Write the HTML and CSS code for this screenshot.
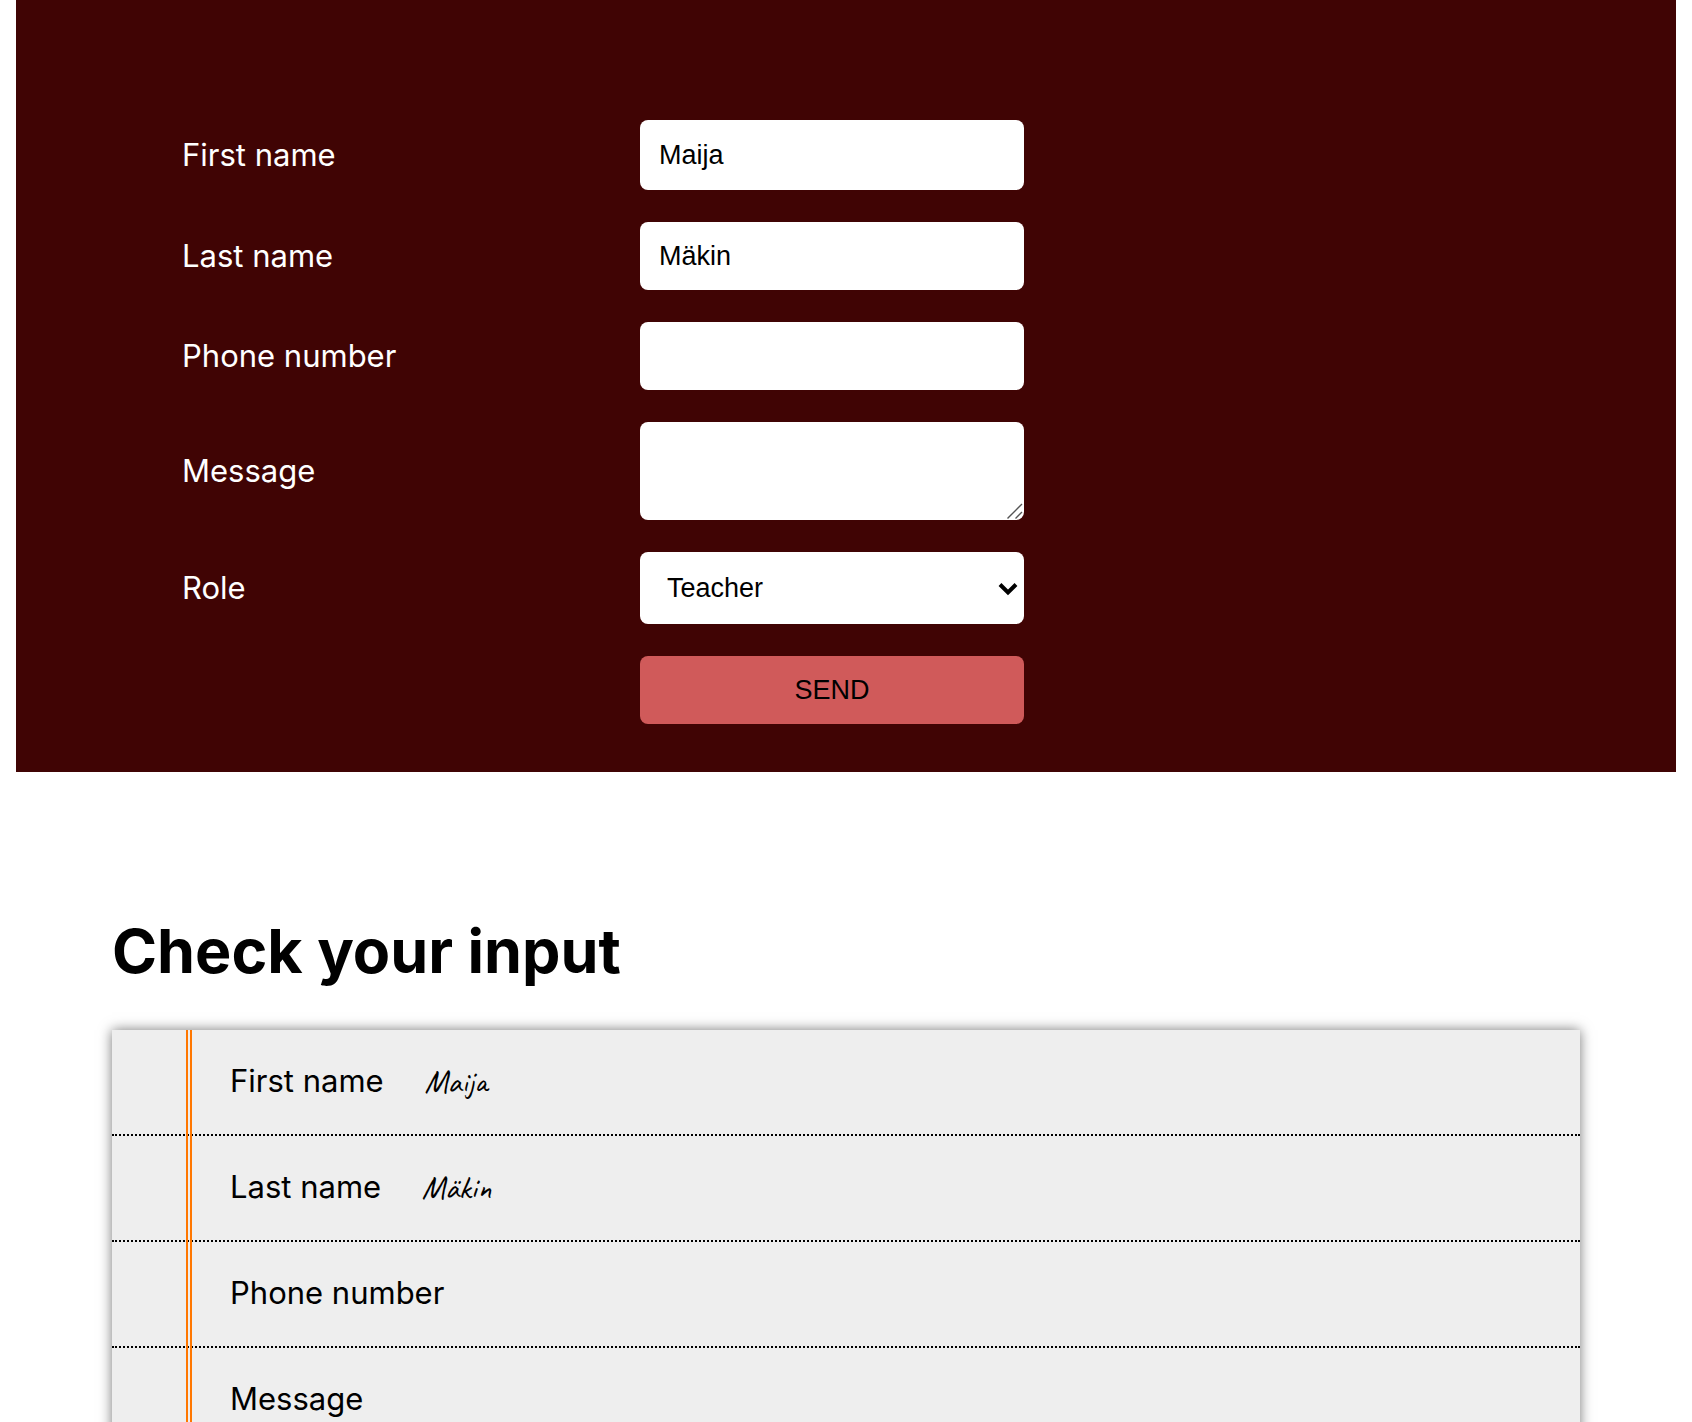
FILE: index.html
```html
<!DOCTYPE html>
<html lang="en">
<head>
  <meta charset="utf-8">
  <meta name="viewport" content="width=device-width, initial-scale=1">
  <title>Check your input</title>
  <link rel="stylesheet" href="styles.css">
</head>
<body>
  <form class="form">
    <label class="label" for="firstname">First name</label>
    <input class="control control-first" type="text" id="firstname" value="Maija">

    <label class="label" for="lastname">Last name</label>
    <input class="control" type="text" id="lastname" value="Mäkin">

    <label class="label" for="phone">Phone number</label>
    <input class="control" type="tel" id="phone">

    <label class="label" for="message">Message</label>
    <div class="control-wrap">
      <textarea class="control message" id="message" rows="2"></textarea>
      <svg class="grip" width="16" height="16" viewBox="0 0 16 16" aria-hidden="true">
        <path d="M0.500 15.500 15 1M8.500 15.500 15 9" fill="none" stroke="#555" stroke-width="1.400"/>
      </svg>
    </div>

    <label class="label" for="role">Role</label>
    <div class="control-wrap">
      <select class="control role" id="role">
        <option>Teacher</option>
        <option>Student</option>
        <option>Other</option>
      </select>
      <svg class="chevron" width="20" height="14" viewBox="0 0 20 14" aria-hidden="true">
        <path d="M2 2.500 10 10.500 18 2.500" fill="none" stroke="#000" stroke-width="4"/>
      </svg>
    </div>

    <button class="control send" type="button">SEND</button>
  </form>

  <main class="review">
    <h1 class="title">Check your input</h1>
    <ul class="sheet">
      <li class="row">First name <span class="value">Maija</span></li>
      <li class="row">Last name <span class="value">Mäkin</span></li>
      <li class="row">Phone number</li>
      <li class="row">Message</li>
    </ul>
  </main>
</body>
</html>
```
FILE: styles.css
```css
* {
  box-sizing: border-box;
}

body {
  margin: 0 16px;
  background: #fff;
  color: #000;
  font-family: Inter, "Liberation Sans", sans-serif;
  font-size: 31px;
  line-height: 38px;
}

.form {
  display: grid;
  grid-template-columns: 426fr 384fr 454fr;
  gap: 32px;
  align-items: center;
  padding: 120px 10% 48px;
  background: #400404;
  color: #fff;
}

.label {
  grid-column: 1;
}

.control,
.control-wrap {
  grid-column: 2;
  width: 100%;
}

.control {
  display: block;
  min-width: 0;
  margin: 0;
  padding: 19px;
  border: 0;
  border-radius: 8px;
  background: #fff;
  color: #000;
  font-family: "Liberation Sans", Arial, sans-serif;
  font-size: 27px;
  line-height: 30px;
}

input.control {
  height: 68px;
}

input.control-first {
  height: 70px;
}

.control-wrap {
  position: relative;
}

.message {
  resize: none;
}

.grip {
  position: absolute;
  right: 1px;
  bottom: 1px;
  pointer-events: none;
}

.role {
  appearance: none;
  padding: 21px 27px;
}

.chevron {
  position: absolute;
  right: 6px;
  top: 30px;
  pointer-events: none;
}

.send {
  background: #d05a5a;
  text-align: center;
}

.review {
  padding: 141px 96px 0;
}

.title {
  margin: 0 0 41px;
  font-size: 61px;
  line-height: 76px;
  font-weight: 700;
}

.sheet {
  position: relative;
  margin: 0;
  padding: 0;
  list-style: none;
  background: #eee;
  box-shadow: 0 0 12px #777;
}

/* Double margin rule running down the notepaper */
.sheet::before {
  content: "";
  position: absolute;
  top: 0;
  bottom: 0;
  left: 74px;
  border-left: 6px double #ff7700;
}

.row {
  padding: 32px 32px 34px 118px;
  border-bottom: 2px dotted #000;
}

.value {
  margin-left: 32px;
  font-family: Caveat, cursive;
  font-size: 32px;
  line-height: 24px;
}
```
